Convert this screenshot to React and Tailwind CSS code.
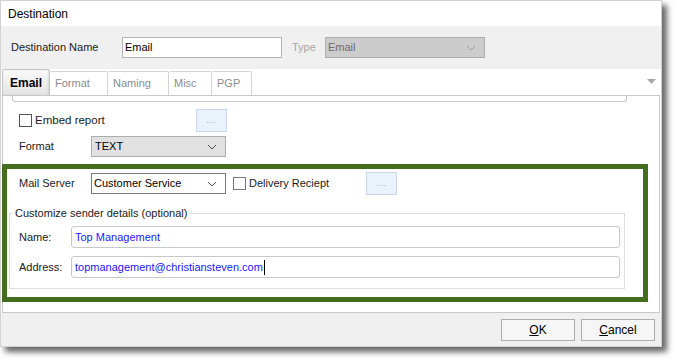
import React from "react";

const font = { fontFamily: '"Liberation Sans", Arial, sans-serif' };

const Chevron = ({ color = "#505050" }) => (
  <svg width="10" height="6" viewBox="0 0 10 6" className="shrink-0">
    <polyline points="1,1 5,5 9,1" fill="none" stroke={color} strokeWidth="1" />
  </svg>
);

const Check = ({ className = "" }) => (
  <span className={"inline-block w-[13px] h-[13px] border border-[#333] bg-white shrink-0 " + className}></span>
);

const Dots = () => (
  <button className="w-[31px] h-[23px] border border-[#c8d8ec] bg-[#eaf3fc] text-[#9aa8b8] text-[9px] leading-none flex items-center justify-center tracking-[1px]">
    ...
  </button>
);

const tabs = [
  { label: "Format", w: "w-[58px]" },
  { label: "Naming", w: "w-[61px]" },
  { label: "Misc", w: "w-[43px]" },
  { label: "PGP", w: "w-[40px]" },
];

export default function App() {
  return (
    <div className="w-[677px] h-[363px] bg-white relative overflow-hidden text-[11px] text-[#1a1a1a]" style={font}>
      {/* dialog */}
      <div className="w-[662px] h-[347px] flex flex-col border border-[#d2d2d2] bg-white shadow-[5px_5px_6px_rgba(0,0,0,0.6)]">
        <div className="h-[25px] px-[7px] flex items-center text-[12px] text-black">Destination</div>

        <div className="h-[43px] bg-[#f0f0f0] flex items-center pl-[10px]">
          <span className="w-[111px]">Destination Name</span>
          <div className="w-[160px] h-[21px] border border-[#b4b4b4] bg-white flex items-center px-[2px] text-black">Email</div>
          <span className="ml-[10px] w-[33px] text-[#a6a6a6]">Type</span>
          <div className="w-[160px] h-[21px] border border-[#adadad] bg-[#cccccc] flex items-center justify-between pl-[2px] pr-[8px] text-[#6b6b6b]">
            Email
            <Chevron color="#a0a0a0" />
          </div>
        </div>

        <div className="h-[26px] flex items-end pl-[1px] relative">
          <div className="w-[48px] h-[26px] border border-b-0 border-[#c4c4c4] rounded-t-[2px] bg-gradient-to-b from-[#fafafa] to-[#e4e4e4] flex items-center justify-center font-bold text-[12px] text-black shadow-[inset_-1px_0_2px_rgba(0,0,0,0.1)]">
            Email
          </div>
          {tabs.map((t) => (
            <div
              key={t.label}
              className={t.w + " h-[24px] border border-l-0 border-b-0 border-[#d4d4d4] rounded-t-[2px] bg-white flex items-center pl-[5px] text-[#8c8c8c]"}
            >
              {t.label}
            </div>
          ))}
          <svg width="9" height="5" viewBox="0 0 9 5" className="absolute right-[5px] top-[10px]">
            <polygon points="0,0 9,0 4.5,5" fill="#a8a8a8" />
          </svg>
        </div>

        {/* tab panel */}
        <div className="h-[218px] mx-[1px] border border-[#c8c8c8] bg-white flex flex-col">
          <div className="h-[6px] ml-[9px] mr-[32px] border border-t-0 border-[#c8c8c8] rounded-b-[3px]"></div>

          <div className="mt-[7px] h-[23px] flex items-center pl-[16px]">
            <Check className="border-[#555]" />
            <span className="ml-[3px] w-[161px] text-[11.5px]">Embed report</span>
            <Dots />
          </div>

          <div className="mt-[4px] h-[21px] flex items-center pl-[16px]">
            <span className="w-[72px]">Format</span>
            <div className="w-[135px] h-[21px] border border-[#adadad] bg-[#e1e1e1] flex items-center justify-between pl-[3px] pr-[8px] text-black">
              TEXT
              <Chevron />
            </div>
          </div>

          <div className="mt-[15px] h-[23px] flex items-center pl-[16px]">
            <span className="w-[72px]">Mail Server</span>
            <div className="w-[135px] h-[21px] border border-[#7a7a7a] bg-white flex items-center justify-between pl-[2px] pr-[8px] text-black">
              Customer Service
              <Chevron />
            </div>
            <Check className="ml-[7px] border-[#777]" />
            <span className="ml-[3px] w-[117px]">Delivery Reciept</span>
            <Dots />
          </div>

          <fieldset className="mt-[11px] ml-[6px] w-[616px] border border-[#dcdcdc] pb-[10px]">
            <legend className="ml-[3px] px-[2px] text-[11px] leading-[14px]">Customize sender details (optional)</legend>
            <div className="flex items-center h-[22px] mt-[6px] pl-[9px]">
              <span className="w-[52px]">Name:</span>
              <div className="w-[549px] h-[22px] border border-[#c8c8c8] rounded-[3px] flex items-center px-[3px] text-[#1a1aff]">
                Top Management
              </div>
            </div>
            <div className="flex items-center h-[22px] mt-[8px] pl-[9px]">
              <span className="w-[52px]">Address:</span>
              <div className="w-[549px] h-[22px] border border-[#c8c8c8] rounded-[3px] flex items-center px-[3px] text-[#1a1aff]">
                topmanagement@christiansteven.com
                <span className="w-[1px] h-[15px] bg-black ml-[1px]"></span>
              </div>
            </div>
          </fieldset>
        </div>

        <div className="flex-1 bg-[#f0f0f0] flex items-center justify-end gap-[6px] pr-[6px]">
          <button className="w-[74px] h-[22px] border border-[#adadad] bg-[#f6f6f6] text-[12px] text-black">
            <span className="underline">O</span>K
          </button>
          <button className="w-[74px] h-[22px] border border-[#adadad] bg-[#f6f6f6] text-[12px] text-black">
            <span className="underline">C</span>ancel
          </button>
        </div>
      </div>

      {/* annotation highlight */}
      <div className="absolute left-[2px] top-[164px] w-[646px] h-[138px] border-[5px] border-[#426e1e]"></div>
    </div>
  );
}
